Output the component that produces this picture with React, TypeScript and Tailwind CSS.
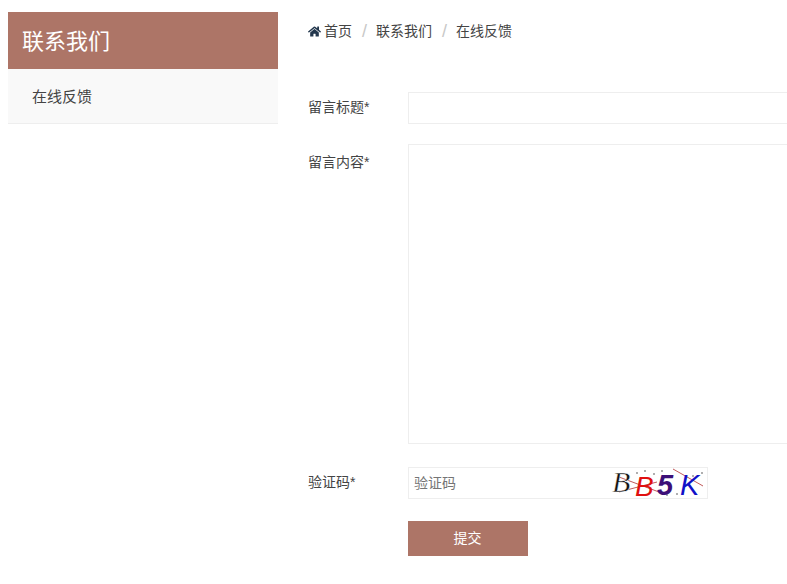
import React from "react";
import { FaHome } from "react-icons/fa";

const fontCn = "font-['Liberation_Sans','Noto_Sans_CJK_SC',sans-serif]";

const Captcha = () => (
  <svg className="h-[30px] w-[100px] overflow-visible" viewBox="0 0 100 30" aria-hidden="true">
    <g stroke="#b03030" strokeWidth="0.8" fill="none">
      <path d="M12 9 L52 24" />
      <path d="M12 24 L50 14" />
      <path d="M66 1 L96 18" />
    </g>
    <g fill="#222">
      <circle cx="30" cy="5" r="0.7" />
      <circle cx="38" cy="3" r="0.7" />
      <circle cx="47" cy="6" r="0.7" />
      <circle cx="55" cy="3" r="0.7" />
      <circle cx="62" cy="9" r="0.7" />
      <circle cx="70" cy="26" r="0.7" />
      <circle cx="95" cy="5" r="0.7" />
      <circle cx="86" cy="8" r="0.7" />
      <circle cx="60" cy="27" r="0.7" />
    </g>
    <text x="5" y="24" className="font-['Liberation_Serif',serif] text-[30px] italic" fill="#111" stroke="#fff" strokeWidth="0.4">B</text>
    <text x="28" y="28" className="font-['Liberation_Sans',sans-serif] text-[28px] italic" fill="#e01010">B</text>
    <text x="50" y="27" className="font-['Liberation_Sans',sans-serif] text-[29px] font-bold italic" fill="#3c0f78">5</text>
    <text x="73" y="27" className="font-['Liberation_Sans',sans-serif] text-[29px] italic" fill="#1010c8">K</text>
  </svg>
);

const App = () => {
  return (
    <div className={`${fontCn} flex h-[584px] w-[787px] gap-[30px] overflow-hidden bg-white pl-2 pt-3 text-sm text-[#444]`}>
      {/* Sidebar */}
      <aside className="w-[270px] shrink-0">
        <h2 className="flex h-[57px] items-center bg-[#ad7567] pl-[14px] pt-0.5 text-[22px] font-normal text-white">联系我们</h2>
        <div className="flex h-[55px] items-center border-b border-[#eeeeee] bg-[#f9f9f9] pl-6 pt-0.5 text-[15px]">在线反馈</div>
      </aside>

      {/* Main */}
      <main className="w-[700px] shrink-0">
        <nav className="flex h-[38px] items-center">
          <FaHome className="mr-[3px] size-[13px] text-[#23374d]" />
          <span>首页</span>
          <span className="pl-[10px] pr-[9px] text-lg text-[#c8c8c8]">/</span>
          <span>联系我们</span>
          <span className="pl-[10px] pr-[9px] text-lg text-[#c8c8c8]">/</span>
          <span>在线反馈</span>
        </nav>

        <form className="mt-[42px] flex flex-col">
          <div className="flex h-8 items-center">
            <label className="w-[100px] shrink-0 pb-0.5">留言标题*</label>
            <input className="h-8 w-full border border-[#eeeeee] outline-none" />
          </div>
          <div className="mt-5 flex">
            <label className="w-[100px] shrink-0 pt-2">留言内容*</label>
            <textarea className="h-[300px] w-full resize-none border border-[#eeeeee] outline-none" />
          </div>
          <div className="mt-[23px] flex items-center">
            <label className="w-[100px] shrink-0 pb-0.5">验证码*</label>
            <div className="flex h-8 w-[300px] items-center justify-between border border-[#eeeeee]">
              <input placeholder="验证码" className="w-[190px] pl-[5px] text-sm outline-none placeholder:text-[#757575]" />
              <Captcha />
            </div>
          </div>
          <div className="mt-[22px] pl-[100px]">
            <button type="button" className="h-[35px] w-[120px] bg-[#ad7567] pb-0.5 pr-px text-sm text-white">提交</button>
          </div>
        </form>
      </main>
    </div>
  );
};

export default App;
